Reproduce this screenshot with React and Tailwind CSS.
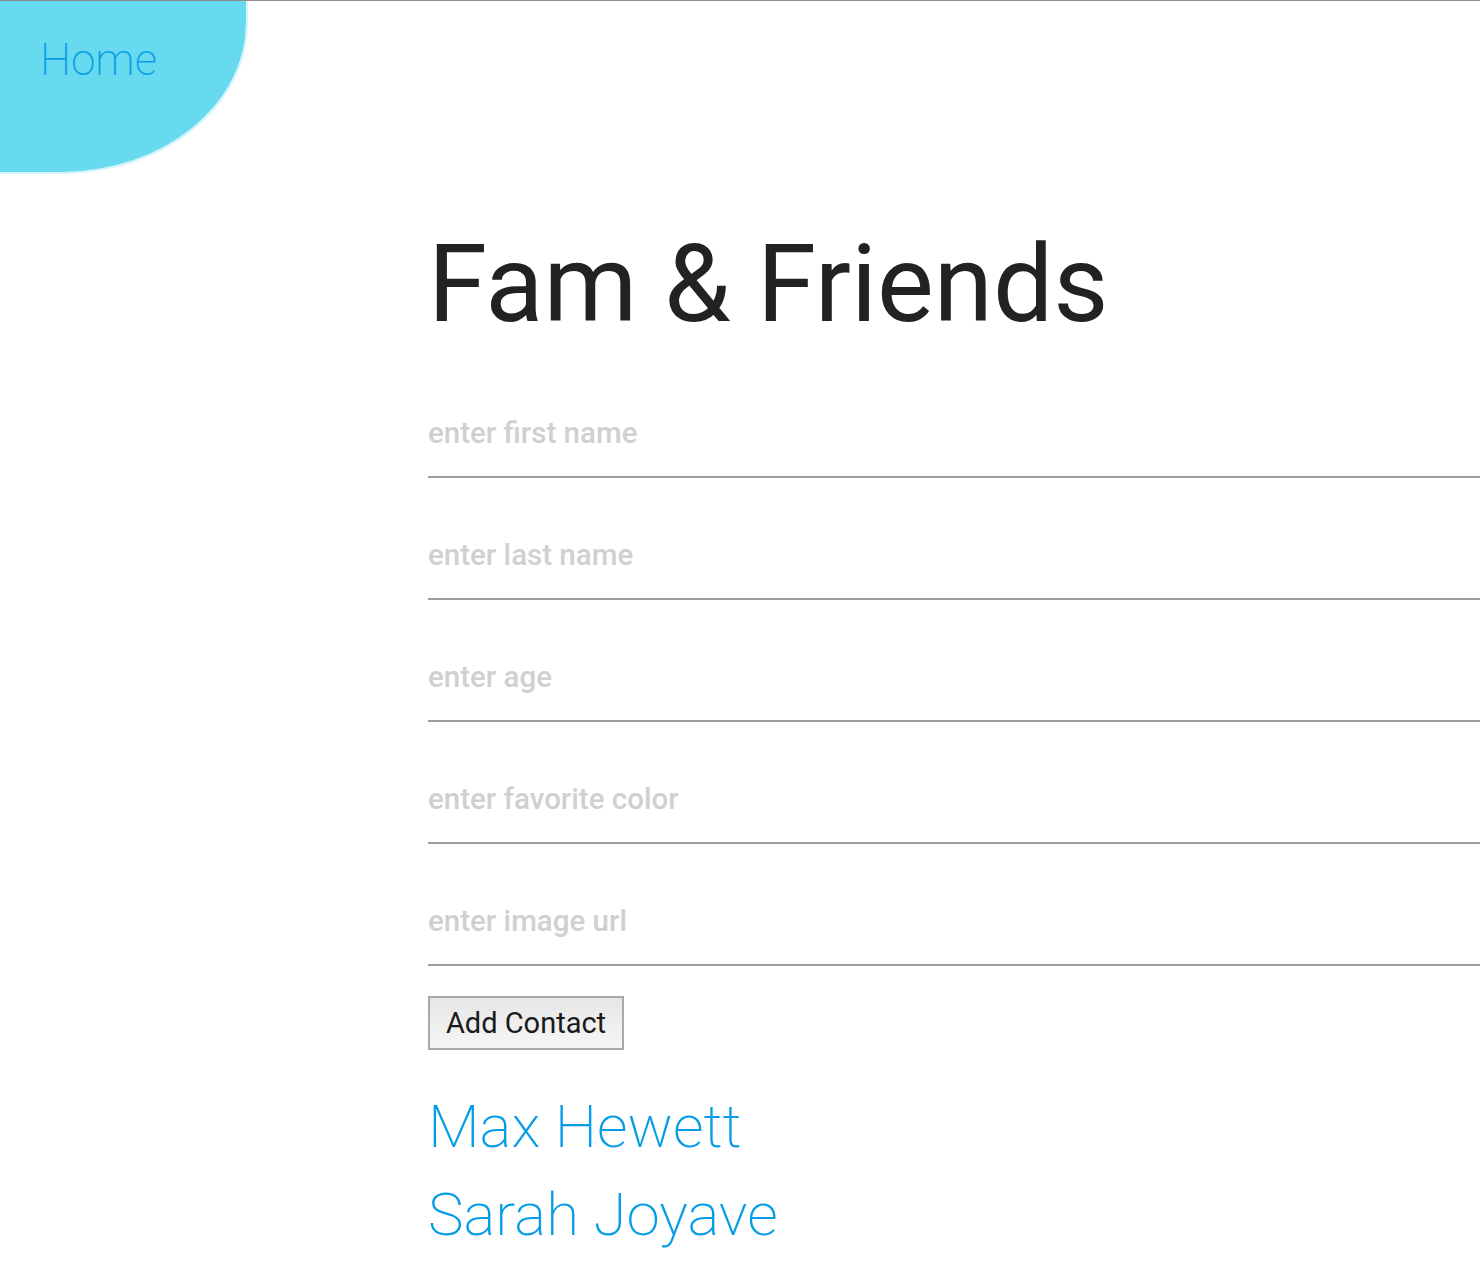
import React from "react";

export default function App() {
  const fields = [
    "enter first name",
    "enter last name",
    "enter age",
    "enter favorite color",
    "enter image url",
  ];
  return (
    <div className="min-h-[1268px] w-[1480px] overflow-hidden bg-white border-t border-[#8c8c8c] font-['Roboto',sans-serif]">
      <div className="w-[246px] h-[171px] bg-[#67daef] rounded-br-[185px_150px] pt-[37px] pl-[40px] shadow-[1px_1px_0_1px_#d3f5fb]">
        <span className="block text-[44px] leading-none font-extralight text-[#0a9fe6]">Home</span>
      </div>
      <div className="ml-[428px] w-[1052px]">
        <h1 className="mt-[59px] text-[107px] leading-none font-normal text-[#222222]">
          Fam &amp; Friends
        </h1>
        <div className="mt-[64px]">
          {fields.map((f, i) => (
            <input
              key={f}
              placeholder={f}
              className={
                "block w-[1060px] h-[76px] pb-[13px] px-0 border-b-2 border-[#9e9e9e] text-[29.5px] font-medium outline-none bg-transparent placeholder-[#d0d0d0] " +
                (i === 0 ? "" : "mt-[46px]")
              }
            />
          ))}
        </div>
        <button className="mt-[30px] block w-[196px] h-[54px] border-2 border-[#a9a9a9] bg-gradient-to-b from-[#e6e6e6] to-[#f6f6f6] text-[29px] text-[#1a1a1a] leading-none">
          Add Contact
        </button>
        <div className="mt-[33px]">
          <div className="text-[60px] leading-[88px] font-extralight text-[#069de6]">Max Hewett</div>
          <div className="text-[60px] leading-[88px] font-extralight text-[#069de6]">Sarah Joyave</div>
        </div>
      </div>
    </div>
  );
}
